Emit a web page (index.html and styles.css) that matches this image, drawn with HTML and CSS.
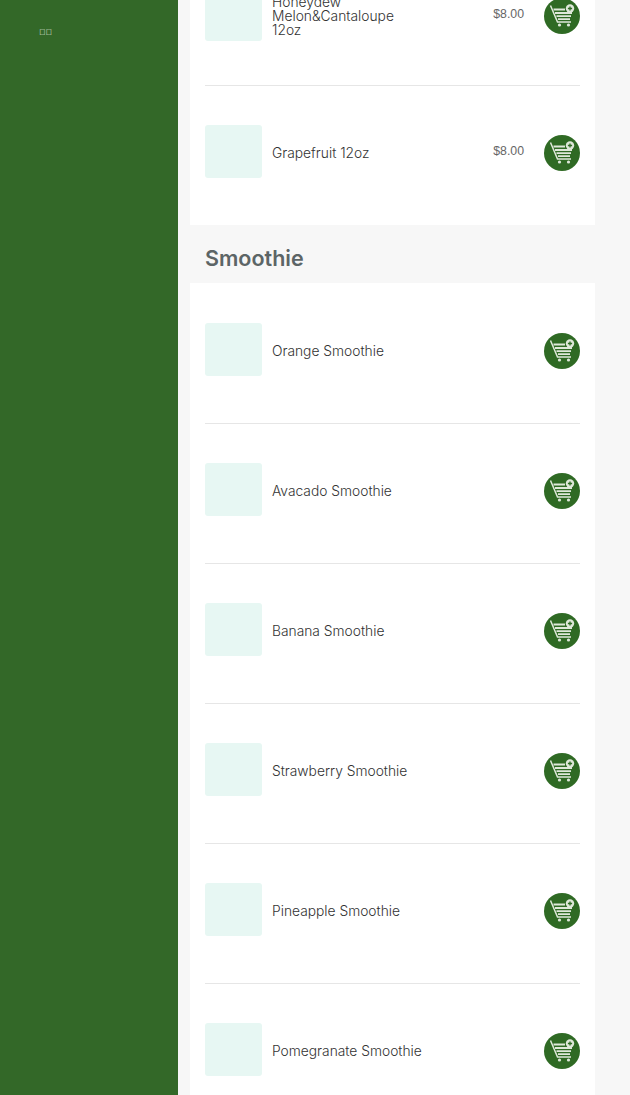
FILE: index.html
```html
<!DOCTYPE html>
<html lang="en">
<head>
    <meta charset="UTF-8">
    <meta name="viewport" content="width=device-width, initial-scale=1.0">
    <title>Menu</title>
    <link rel="stylesheet" href="styles.css">
</head>
<body>
    <svg class="icon-defs" width="0" height="0">
        <symbol id="cart" viewBox="0 0 36 36">
            <circle cx="18" cy="18" r="18" fill="#2f6a24"/>
            <path d="M6.5 7.5 L13.5 24 H27" fill="none" stroke="#dfe8da" stroke-width="1.5"/>
            <path d="M9.5 11.5 H21 M11 15 H28 M12.5 18.2 H27 M14 21.2 H26" fill="none" stroke="#dfe8da" stroke-width="1.8"/>
            <circle cx="15.5" cy="27" r="1.6" fill="#dfe8da"/>
            <circle cx="24.5" cy="27" r="1.6" fill="#dfe8da"/>
            <circle cx="26" cy="10.5" r="4.2" fill="#dfe8da"/>
            <path d="M26 8.4 V12.6 M23.9 10.5 H28.1" stroke="#2f6a24" stroke-width="1.3"/>
        </symbol>
    </svg>

    <div class="page">
        <aside class="sidebar">
            <a class="lang" href="#">&#xE000;&#xE000;</a>
        </aside>

        <main class="menu">
            <section class="group">
                <div class="item item-first">
                    <div class="thumb"></div>
                    <div class="name">Honeydew Melon&amp;Cantaloupe 12oz</div>
                    <div class="price">$8.00</div>
                    <button class="add"><svg><use href="#cart"/></svg></button>
                </div>
                <div class="item item-last">
                    <div class="thumb"></div>
                    <div class="name">Grapefruit 12oz</div>
                    <div class="price">$8.00</div>
                    <button class="add"><svg><use href="#cart"/></svg></button>
                </div>
            </section>

            <h2 class="group-title">Smoothie</h2>

            <section class="group">
                <div class="item">
                    <div class="thumb"></div>
                    <div class="name">Orange Smoothie</div>
                    <button class="add"><svg><use href="#cart"/></svg></button>
                </div>
                <div class="item">
                    <div class="thumb"></div>
                    <div class="name">Avacado Smoothie</div>
                    <button class="add"><svg><use href="#cart"/></svg></button>
                </div>
                <div class="item">
                    <div class="thumb"></div>
                    <div class="name">Banana Smoothie</div>
                    <button class="add"><svg><use href="#cart"/></svg></button>
                </div>
                <div class="item">
                    <div class="thumb"></div>
                    <div class="name">Strawberry Smoothie</div>
                    <button class="add"><svg><use href="#cart"/></svg></button>
                </div>
                <div class="item">
                    <div class="thumb"></div>
                    <div class="name">Pineapple Smoothie</div>
                    <button class="add"><svg><use href="#cart"/></svg></button>
                </div>
                <div class="item">
                    <div class="thumb"></div>
                    <div class="name">Pomegranate Smoothie</div>
                    <button class="add"><svg><use href="#cart"/></svg></button>
                </div>
            </section>
        </main>
    </div>
</body>
</html>
```

FILE: styles.css
```css
* {
    box-sizing: border-box;
    margin: 0;
    padding: 0;
}

html, body {
    height: 100%;
    overflow: hidden;
}

body {
    font-family: "Inter", "Liberation Sans", sans-serif;
    background-color: #f7f7f7;
    color: #333;
}

.icon-defs {
    display: block;
}

.page {
    display: flex;
    height: 1095px;
    overflow: hidden;
}

.sidebar {
    flex: 0 0 178px;
    background-color: #336828;
    padding: 25px 0 0 39px;
}

.lang {
    display: block;
    color: #f2f7ef;
    font-family: "Liberation Sans", sans-serif;
    font-size: 8.5px;
    line-height: 14px;
    text-decoration: none;
}

/* list is scrolled, first row starts above the window */
.menu {
    flex: 0 0 405px;
    margin-left: 12px;
    margin-top: -54px;
}

.group {
    background-color: #fff;
    padding: 0 15px;
}

.group-title {
    height: 58px;
    padding-left: 15px;
    font-size: 21.5px;
    font-weight: 600;
    line-height: 67px;
    color: #5c6566;
}

.group-title + .group {
    padding-top: 1px;
}

.item {
    display: flex;
    align-items: flex-start;
    height: 140px;
    padding-top: 39px;
    border-bottom: 1px solid #e6e6e6;
}

.item-first {
    padding-top: 42px;
}

.item-last {
    height: 139px;
    border-bottom: none;
}

.thumb {
    flex: 0 0 57px;
    height: 53px;
    background-color: #e7f7f3;
    border-radius: 3px;
    margin-right: 10px;
}

.name {
    width: 165px;
    height: 56px;
    display: flex;
    align-items: center;
    font-size: 13.8px;
    font-weight: 300;
    line-height: 14px;
    margin-right: auto;
}

.item-first .name {
    width: 130px;
}

.price {
    display: flex;
    align-items: center;
    height: 56px;
    font-family: "Liberation Sans", Arial, sans-serif;
    font-size: 12.3px;
    color: #666;
    margin-right: 20px;
    margin-top: -2px;
}

.add {
    flex: 0 0 36px;
    height: 36px;
    border: none;
    background: none;
    cursor: pointer;
    margin-top: 10px;
}

.add svg {
    display: block;
    width: 36px;
    height: 36px;
}
```
